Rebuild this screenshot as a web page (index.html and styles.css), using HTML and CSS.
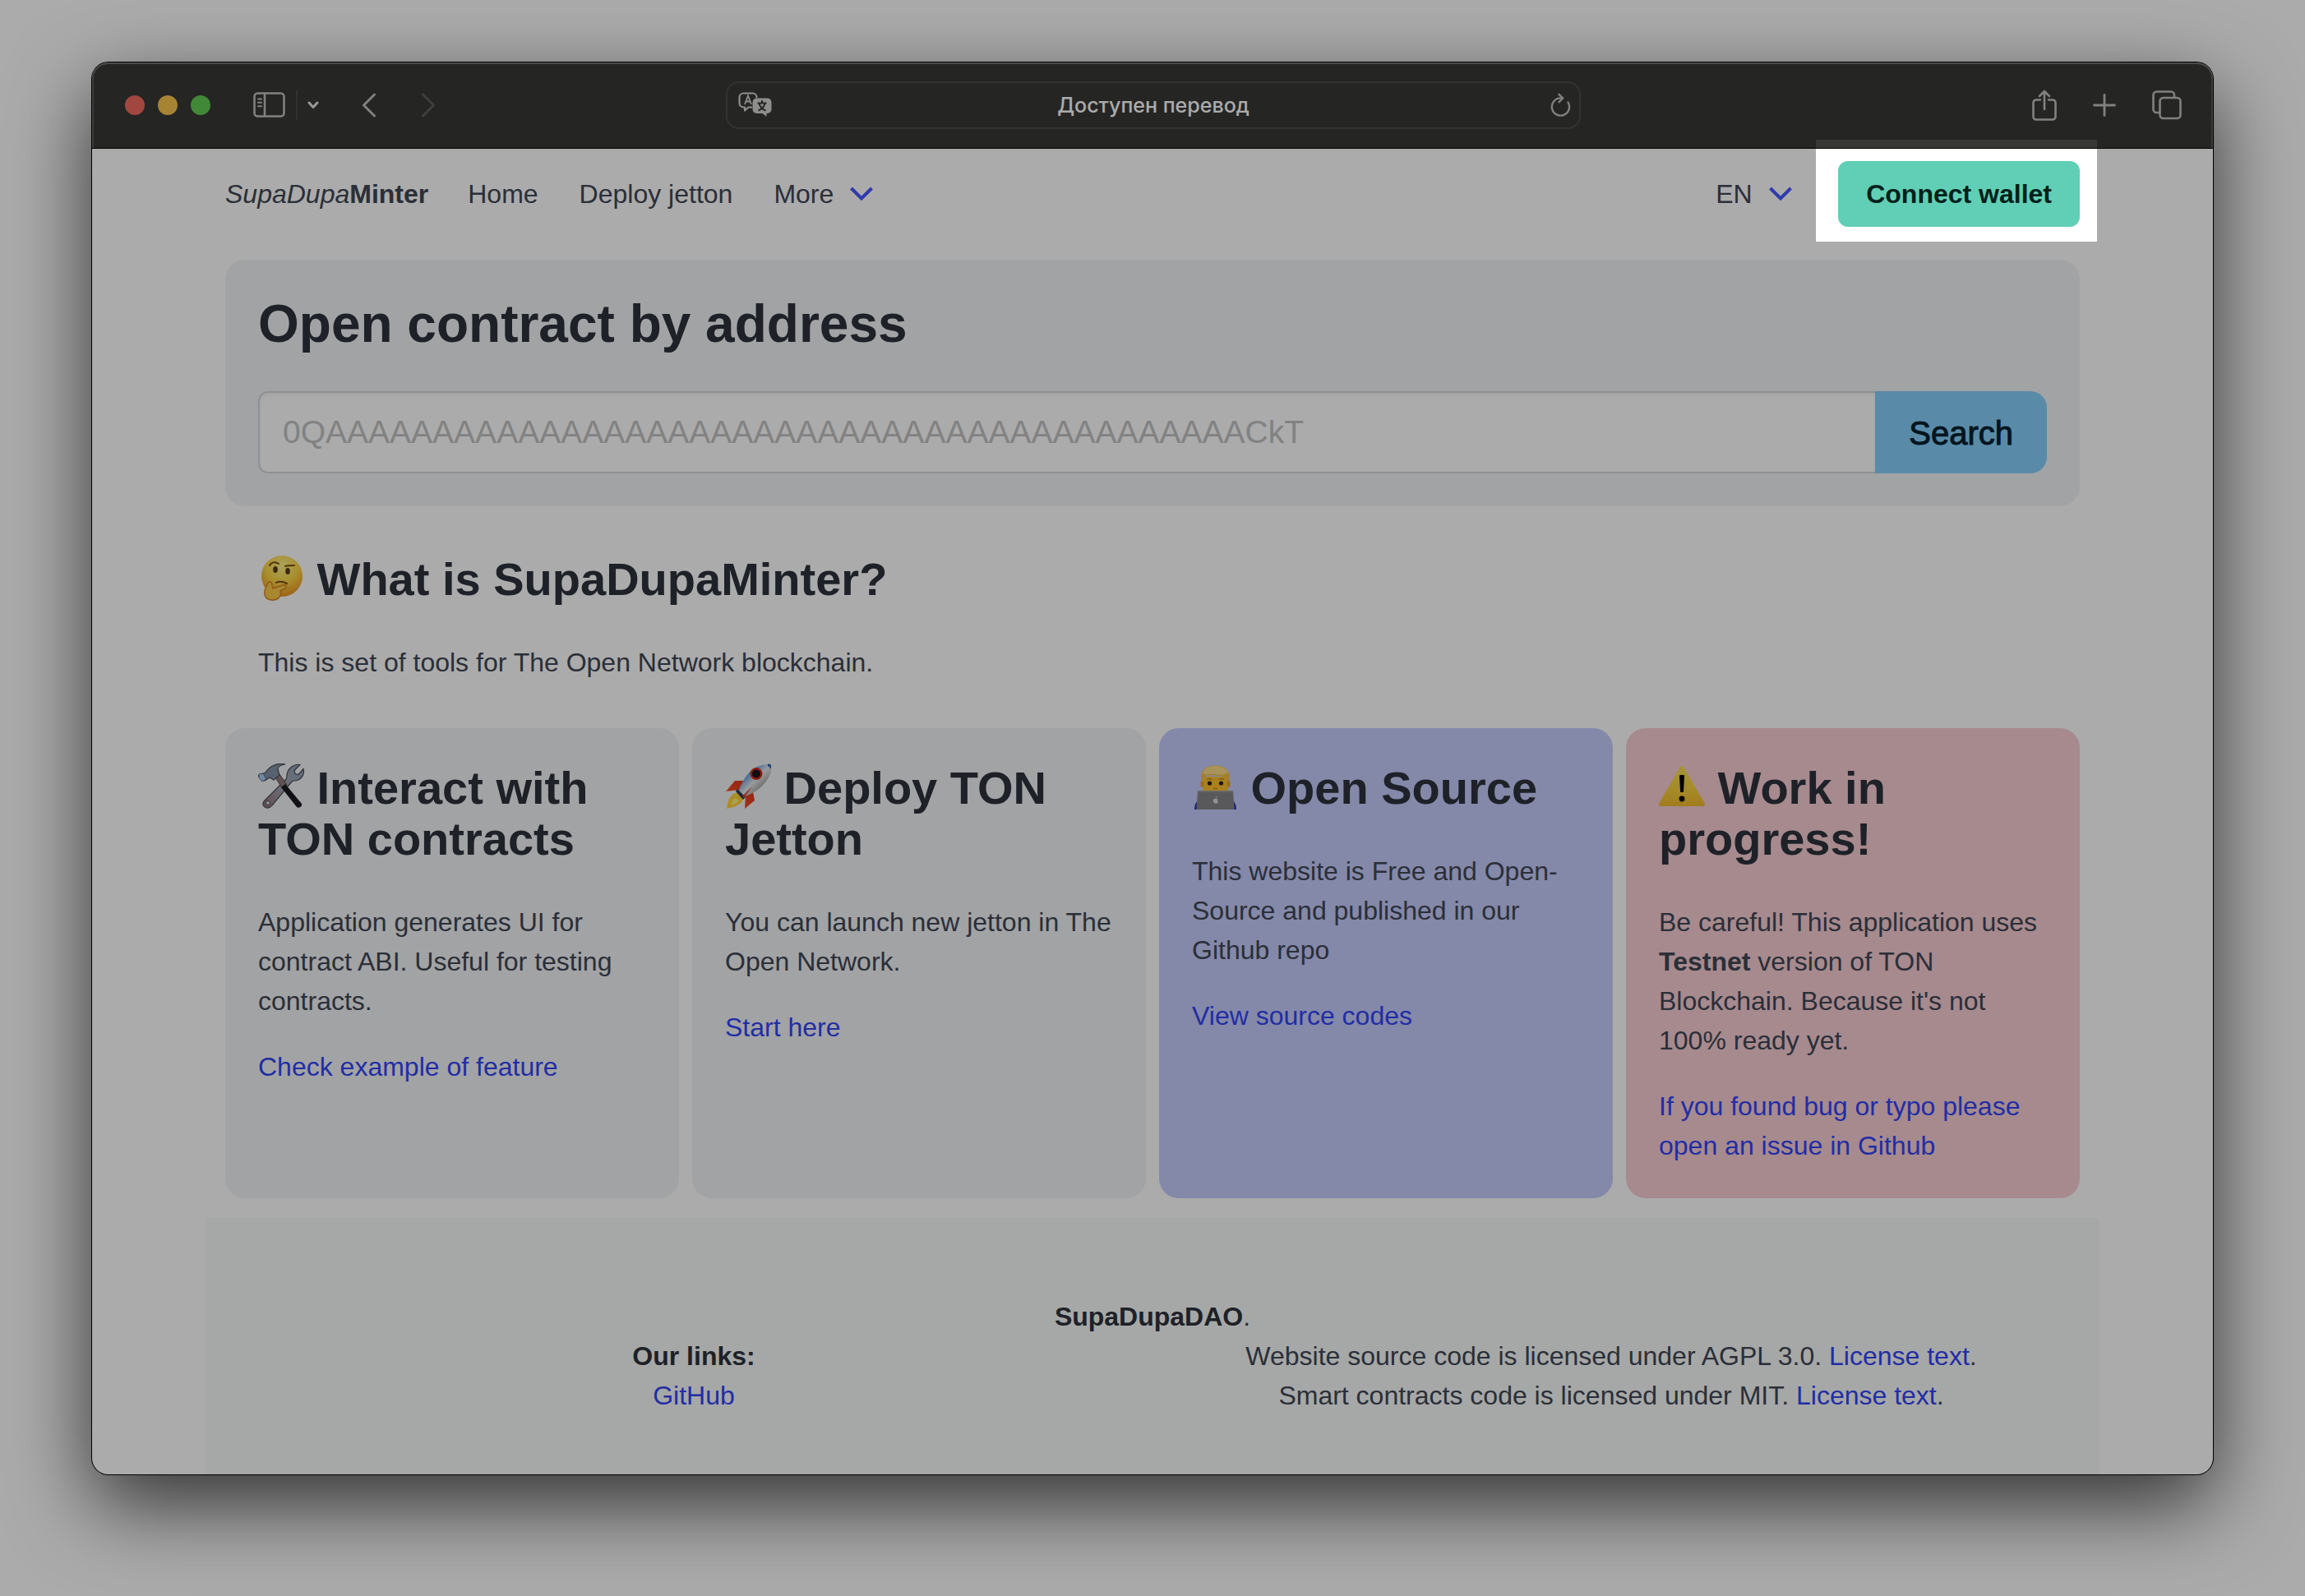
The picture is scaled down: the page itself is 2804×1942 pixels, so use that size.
FILE: index.html
```html
<!DOCTYPE html>
<html lang="en">
<head>
<meta charset="utf-8">
<title>SupaDupaMinter</title>
<meta name="viewport" content="width=device-width, initial-scale=1">
<link rel="stylesheet" href="styles.css">
</head>
<body>
<div class="window">
  <div class="toolbar">
    <div class="toolbar-side">
      <div class="lights">
        <span class="light light-close"></span>
        <span class="light light-minimize"></span>
        <span class="light light-zoom"></span>
      </div>
      <button class="tool tool-sidebar" type="button" aria-label="Sidebar">
        <svg width="40" height="32" viewBox="0 0 40 32" fill="none" stroke="currentColor" stroke-width="2.6" stroke-linecap="round"><rect x="1.5" y="1.5" width="36" height="28" rx="4"/><path d="M14 2v27"/><path d="M6 8.500h4M6 12.800h4M6 17.200h4" stroke-width="2"/></svg>
      </button>
      <span class="tool-divider"></span>
      <button class="tool tool-bright" type="button" aria-label="Tab groups">
        <svg width="14" height="10" viewBox="0 0 14 10" fill="none" stroke="currentColor" stroke-width="3" stroke-linecap="round" stroke-linejoin="round"><path d="M2 2l5 5.500 5-5.500"/></svg>
      </button>
      <button class="tool tool-back" type="button" aria-label="Back">
        <svg width="18" height="30" viewBox="0 0 18 30" fill="none" stroke="currentColor" stroke-width="3" stroke-linecap="round" stroke-linejoin="round"><path d="M15.500 2L2.500 15l13 13"/></svg>
      </button>
      <button class="tool tool-forward" type="button" aria-label="Forward" disabled>
        <svg width="18" height="30" viewBox="0 0 18 30" fill="none" stroke="currentColor" stroke-width="3" stroke-linecap="round" stroke-linejoin="round"><path d="M2.500 2l13 13-13 13"/></svg>
      </button>
    </div>
    <div class="address">
      <span class="address-slot">
        <svg width="42" height="32" viewBox="0 0 42 32" fill="none"><path d="M17 18.500h-4.500L8 22.500v-4H6.500a5 5 0 0 1-5-5v-7a5 5 0 0 1 5-5h11a5 5 0 0 1 5 5V7" stroke="#d4d4d2" stroke-width="2.200" stroke-linejoin="round"/><path d="M8 15l4-10.500L16 15M9.400 11.500h5.200" stroke="#d4d4d2" stroke-width="1.800"/><path d="M22.500 7.500h13a5 5 0 0 1 5 5v8.500a5 5 0 0 1-5 5h-1V30l-5-4h-7a5 5 0 0 1-5-5v-8.500a5 5 0 0 1 5-5z" fill="#d4d4d2"/><path d="M29 10v3M23.500 13.500h11M25.500 14c1 4 4 7 8 8.500M32.500 14c-1 4-4 7-8 8.500" stroke="#383836" stroke-width="2"/></svg>
      </span>
      <input class="address-input" type="text" aria-label="Address" value="Доступен перевод">
      <button class="tool address-slot address-reload" type="button" aria-label="Reload">
        <svg width="26" height="30" viewBox="0 0 26 30" fill="none" stroke="currentColor" stroke-width="2.400" stroke-linecap="round" stroke-linejoin="round"><path d="M22.500 11.500A10.600 10.600 0 1 1 13 6.400h2.500"/><path d="M11.500 1.800l4.800 4.700-4.800 4.700"/></svg>
      </button>
    </div>
    <div class="toolbar-side toolbar-end">
      <button class="tool" type="button" aria-label="Share">
        <svg width="30" height="38" viewBox="0 0 30 38" fill="none" stroke="currentColor" stroke-width="2.600" stroke-linecap="round" stroke-linejoin="round"><path d="M10 12.500H5a3.500 3.500 0 0 0-3.500 3.500v17A3.500 3.500 0 0 0 5 36.500h20a3.500 3.500 0 0 0 3.500-3.500V16a3.500 3.500 0 0 0-3.500-3.500h-5M15 24V2M9 8l6-6 6 6"/></svg>
      </button>
      <button class="tool" type="button" aria-label="New tab">
        <svg width="28" height="28" viewBox="0 0 28 28" fill="none" stroke="currentColor" stroke-width="2.800" stroke-linecap="round"><path d="M14 1.500v25M1.500 14h25"/></svg>
      </button>
      <button class="tool" type="button" aria-label="Tab overview">
        <svg width="36" height="36" viewBox="0 0 36 36" fill="none" stroke="currentColor" stroke-width="2.600"><rect x="9.500" y="9" width="25" height="25" rx="4"/><path d="M9 27H5.500a4 4 0 0 1-4-4V5.500a4 4 0 0 1 4-4H23a4 4 0 0 1 4 4V9"/></svg>
      </button>
    </div>
  </div>

  <div class="page">
    <header class="container navbar">
      <a class="nav-link" href="#"><em>SupaDupa</em><strong>Minter</strong></a>
      <nav class="nav-links">
        <a class="nav-link" href="#">Home</a>
        <a class="nav-link" href="#">Deploy jetton</a>
        <button class="nav-link nav-more" type="button">More
          <svg class="chevron" width="28" height="18" viewBox="0 0 28 18" fill="none" stroke="currentColor" stroke-width="4"><path d="M1.500 2L14 14.500 26.500 2"/></svg>
        </button>
      </nav>
      <label class="language">
        <select class="nav-link" aria-label="Language"><option>EN</option></select>
        <svg class="chevron" width="28" height="18" viewBox="0 0 28 18" fill="none" stroke="currentColor" stroke-width="4"><path d="M1.500 2L14 14.500 26.500 2"/></svg>
      </label>
      <div class="spotlight">
        <button class="connect" type="button">Connect wallet</button>
      </div>
    </header>

    <main class="container tiles">
      <section class="tile tile-grey">
        <h1 class="title-big">Open contract by address</h1>
        <form class="search">
          <input class="search-input" type="text" aria-label="Contract address" placeholder="0QAAAAAAAAAAAAAAAAAAAAAAAAAAAAAAAAAAAAAAAAAAACkT">
          <button class="search-button" type="button">Search</button>
        </form>
      </section>

      <section class="tile">
        <h2 class="title"><svg class="emoji" role="img" aria-label="Thinking face" viewBox="0 0 56 56">
          <defs><radialGradient id="face" cx=".5" cy=".25" r=".8"><stop offset="0" stop-color="#fff28a"/><stop offset=".5" stop-color="#fbd545"/><stop offset="1" stop-color="#e98a1e"/></radialGradient></defs>
          <circle cx="29" cy="26" r="25" fill="url(#face)"/>
          <ellipse cx="21" cy="18" rx="2.800" ry="4" fill="#5a3a10"/><ellipse cx="36" cy="20" rx="2.800" ry="4" fill="#5a3a10"/>
          <path d="M14 13c2-4 7-5 11-2M33 14c3-1 7-1 11-1" stroke="#7a4d10" stroke-width="2" fill="none" stroke-linecap="round"/>
          <path d="M22 34c4-2 9-1 13 1" stroke="#7a4d10" stroke-width="2" fill="none" stroke-linecap="round"/>
          <path d="M13 33c3-1 4 2 4 5l1 3 12-4c4-1 6 2 3 4l-6 3c2 6-3 11-8 11-8 1-12-4-11-10 0-4 2-7 5-12z" fill="#fbc94a" stroke="#d98526" stroke-width="1.500"/>
        </svg> What is SupaDupaMinter?</h2>
        <p>This is set of tools for The Open Network blockchain.</p>
      </section>

      <div class="cards">
        <section class="tile tile-grey">
          <h2 class="title"><svg class="emoji" role="img" aria-label="Hammer and wrench" viewBox="0 0 56 56">
            <defs><linearGradient id="steel" x1="1" y1="0" x2="0" y2="1"><stop offset="0" stop-color="#8da0b8"/><stop offset=".5" stop-color="#a5a8b5"/><stop offset="1" stop-color="#8f6f76"/></linearGradient></defs>
            <path d="M51 1.500l-7 7 1 4 4 1 6-7c2 7-3 14-10 14.500-2 0-3 0-4 1L17 51c-3 4-8 4-10 1-2-2-1-5 1-7l26-26c1-1 1-2 1-4 0-8 8-15 16-13.500z" fill="url(#steel)" stroke="#4a4b55" stroke-width="1.200"/>
            <circle cx="12" cy="48" r="2.500" fill="#ddd" stroke="#444" stroke-width="1"/>
            <path d="M21 17l5-4 9 13-5 5z" fill="#8e7b7e" stroke="#4a4448" stroke-width="1"/>
            <path d="M28 29l5-4 20 24c1 3-3 6-6 4z" fill="#1b1a20"/>
            <path d="M9 11C14 3 23-1 33 1c-6 1-9 3-9 6l2 7-7 6-5-3-6 4-8-6z" fill="#8292a8" stroke="#4a4b55" stroke-width="1.200"/>
            <path d="M1 13l5-1 4 7-5 3-4-5z" fill="#a9cdf5" stroke="#55657a" stroke-width="1"/>
          </svg> Interact with TON contracts</h2>
          <p>Application generates UI for contract ABI. Useful for testing contracts.</p>
          <p><a href="#">Check example of feature</a></p>
        </section>

        <section class="tile tile-grey">
          <h2 class="title"><svg class="emoji" role="img" aria-label="Rocket" viewBox="0 0 56 56">
            <defs><linearGradient id="hull" x1="0" y1="0" x2="1" y2="1"><stop offset="0" stop-color="#3f78c0"/><stop offset=".3" stop-color="#6ea0dc"/><stop offset=".5" stop-color="#e4e8ea"/><stop offset=".75" stop-color="#9c9a96"/><stop offset="1" stop-color="#3c4046"/></linearGradient>
            <linearGradient id="fin" x1="1" y1="0" x2="0" y2="1"><stop offset="0" stop-color="#d82a18"/><stop offset=".6" stop-color="#ee4a22"/><stop offset="1" stop-color="#ffc23c"/></linearGradient></defs>
            <path d="M25 21H12L1 34l17-2zM34 35l2 10-12 10 1-16z" fill="url(#fin)"/>
            <path d="M10 37C3 42 4 48 2 55c8-2 16-3 20-11l-4-9z" fill="#ffd23a"/>
            <path d="M12 42c-3 3-4 6-5 9 4-1 8-3 10-6z" fill="#fff27a"/>
            <path d="M56 2C47-1 34 4 26 15c-4 6-8 12-9 18l7 7c6-2 12-5 17-9C52 22 58 10 56 2z" fill="url(#hull)"/>
            <path d="M52 2c3 0 4 1 4 4" stroke="#2f63a5" stroke-width="3" fill="none"/>
            <circle cx="38" cy="12.500" r="6.300" fill="#15161c" stroke="#d8281c" stroke-width="2.400"/>
            <path d="M15 31l10 10-3 3-9-10z" fill="#2b3a52"/>
            <path d="M33 28L23 42l-2-2z" fill="#e03a20"/>
          </svg> Deploy TON Jetton</h2>
          <p>You can launch new jetton in The Open Network.</p>
          <p><a href="#">Start here</a></p>
        </section>

        <section class="tile tile-blue">
          <h2 class="title"><svg class="emoji" role="img" aria-label="Technologist" viewBox="0 0 56 56">
            <path d="M3 56c0-7 3-11 8-13h35c5 2 8 6 8 13z" fill="#2a35c0"/>
            <path d="M13 16h31v14c0 8-7 12-15.500 12S13 38 13 30z" fill="#fcc22c"/>
            <ellipse cx="12.500" cy="25" rx="2" ry="4" fill="#e5a42a"/><ellipse cx="44.500" cy="25" rx="2" ry="4" fill="#e5a42a"/>
            <path d="M12 22C9 9 16 2.500 28.500 2.500S48 9 45 22l-3-6c-2 0-5 0-8-1-5-1-12 0-17-1l-3 8z" fill="#f3bd45"/>
            <path d="M13 12C15 6 21 3 28.500 3S43 6 44 11c-5 3-10 3-15 2s-11 1-16-1z" fill="#fbdc86"/>
            <circle cx="21.500" cy="24" r="2.600" fill="#33210c"/><circle cx="35.500" cy="24" r="2.600" fill="#33210c"/>
            <path d="M18 19.500c2-1 5-1 6.500 0M32.500 19.500c2-1 5-1 6.500 0" stroke="#b5822a" stroke-width="1.200" fill="none"/>
            <path d="M26 30.500h5" stroke="#c47d20" stroke-width="1.200"/>
            <path d="M7 33h43l1.500 23h-46z" fill="#858588"/><path d="M7 33h43v2H7z" fill="#9a9a9c"/>
            <path d="M28.500 43c1.500-.8 3 0 3 1-1 1-.8 2 .4 2.800-.8 1.600-1.600 2-3 1.600-1.600.6-3-.8-3-2.900 0-2 1.200-3 2.600-2.500zM28.800 42c0-1.500.7-2 1.500-2.300 0 1.500-.7 2.300-1.500 2.300z" fill="#ddd"/>
          </svg> Open Source</h2>
          <p>This website is Free and Open-Source and published in our Github repo</p>
          <p><a href="#">View source codes</a></p>
        </section>

        <section class="tile tile-red">
          <h2 class="title"><svg class="emoji" role="img" aria-label="Warning" viewBox="0 0 56 56">
            <defs><linearGradient id="sign" x1="0" y1="0" x2="0" y2="1"><stop offset="0" stop-color="#f8dd55"/><stop offset=".6" stop-color="#f7cf3c"/><stop offset="1" stop-color="#f2b92e"/></linearGradient></defs>
            <path d="M25.600 4.500Q28 1 30.400 4.500L55.500 48q1.500 4-2.500 4H3q-4 0-2.500-4z" fill="url(#sign)"/>
            <path d="M25 15q0-1 1-1h4q1 0 1 1l-1 19q0 1-1 1h-2q-1 0-1-1z"/><circle cx="28" cy="43" r="3.400"/>
          </svg> Work in progress!</h2>
          <p>Be careful! This application uses <strong>Testnet</strong> version of TON Blockchain. Because it's not 100% ready yet.</p>
          <p><a href="#">If you found bug or typo please open an issue in Github</a></p>
        </section>
      </div>
    </main>

    <footer class="footer">
      <div><strong>SupaDupaDAO</strong>.</div>
      <div class="footer-columns">
        <div>
          <strong>Our links:</strong><br>
          <a href="#">GitHub</a>
        </div>
        <div>
          Website source code is licensed under AGPL 3.0. <a href="#">License text</a>.<br>
          Smart contracts code is licensed under MIT. <a href="#">License text</a>.
        </div>
      </div>
    </footer>
  </div>
</div>
</body>
</html>
```

FILE: styles.css
```css
:root {
  --text: #404654;
  --text-strong: #2e323c;
  --link: #3444f7;
  --toolbar: #383836;
  --font: "Liberation Sans", Arial, sans-serif;
}

* {
  box-sizing: border-box;
}

body {
  margin: 0;
  padding: 76px 4% 148px;
  background: #fff;
  color: var(--text);
  font: 32px/48px var(--font);
}

a {
  color: var(--link);
  text-decoration: none;
}

button,
input,
select {
  margin: 0;
  padding: 0;
  border: 0;
  background: none;
  color: inherit;
  font: inherit;
}

svg {
  display: block;
  flex: none;
}

.window {
  border-radius: 20px;
  background: #fff;
  box-shadow: 0 0 0 1px #000, 0 36px 100px rgba(0, 0, 0, 0.7);
}

/* Browser toolbar */
.toolbar {
  display: grid;
  grid-template-columns: minmax(0, 1fr) minmax(0, 1040px) minmax(0, 1fr);
  align-items: center;
  height: 105px;
  padding: 0 38px 0 40px;
  border-bottom: 1px solid #000;
  border-radius: 20px 20px 0 0;
  background: var(--toolbar);
  box-shadow: inset 0 2px #70706c, inset 2px 0 #5c5c5a, inset -2px 0 #5c5c5a;
}

.toolbar-side {
  display: flex;
  align-items: center;
}

.toolbar-end {
  justify-content: flex-end;
  gap: 44px;
}

.lights {
  display: flex;
  gap: 16px;
  margin-right: 52px;
}

.light {
  width: 24px;
  height: 24px;
  border-radius: 50%;
}

.light-close {
  background: #f06b60;
}

.light-minimize {
  background: #fac44e;
}

.light-zoom {
  background: #62cc54;
}

.tool {
  display: flex;
  align-items: center;
  justify-content: center;
  color: #c0c0be;
}

.tool-bright {
  color: #e4e4e2;
}

.tool-divider {
  width: 2px;
  height: 36px;
  margin: 0 12px;
  background: #4a4a48;
}

.tool-back {
  margin-left: 52px;
}

.tool-forward {
  margin-left: 54px;
  color: #5e5e5c;
}

.address {
  display: flex;
  align-items: center;
  height: 58px;
  border: 2px solid #4c4c4a;
  border-radius: 16px;
}

.address-slot {
  display: flex;
  flex: none;
  justify-content: center;
  width: 68px;
}

.address-reload {
  justify-content: flex-end;
  padding-right: 10px;
}

.address-input {
  flex: 1;
  min-width: 0;
  color: #fff;
  font: 500 25px/32px Inter, sans-serif;
  text-align: center;
}

/* Page */
.container {
  max-width: 2304px;
  margin: 0 auto;
  padding: 0 24px;
}

.navbar {
  display: flex;
  align-items: center;
  gap: 48px;
  padding-top: 15px;
  padding-bottom: 40px;
}

.nav-links {
  display: flex;
  flex: 1;
  gap: 50px;
}

.nav-link {
  color: var(--text);
  white-space: nowrap;
}

.nav-more,
.language {
  display: flex;
  align-items: center;
  gap: 20px;
}

.language select {
  appearance: none;
}

.chevron {
  color: #4657ff;
}

/* Dims the whole screen apart from the area round the button */
.spotlight {
  position: relative;
  margin-left: 8px;
}

.spotlight::after {
  content: "";
  position: absolute;
  inset: -26px -21px -18px -27px;
  box-shadow: 0 0 0 9999px rgba(0, 0, 0, 0.33);
  pointer-events: none;
}

.connect {
  display: block;
  height: 80px;
  padding: 0 34px;
  border-radius: 12px;
  background: #60cfb5;
  color: #04201a;
  font-weight: 700;
  white-space: nowrap;
}

.tiles,
.cards {
  display: grid;
  gap: 16px;
}

.cards {
  grid-template-columns: repeat(4, minmax(0, 1fr));
}

.tile {
  padding: 42px 40px 40px;
  border-radius: 24px;
}

.tile-grey {
  background: #f2f4f6;
}

.tile-blue {
  background: #c5ccfc;
}

.tile-red {
  background: #f8ced4;
}

.title,
.title-big {
  margin: 0 0 46px;
  color: var(--text-strong);
  font-weight: 700;
}

.title {
  font-size: 56px;
  line-height: 62px;
}

.title-big {
  font-size: 64px;
  line-height: 72px;
}

.emoji {
  display: inline-block;
  width: 56px;
  height: 56px;
  vertical-align: -7px;
}

.tile p {
  margin: 0;
}

.tile p + p {
  margin-top: 32px;
}

.search {
  display: flex;
}

.search-input {
  flex: 1;
  min-width: 0;
  height: 100px;
  padding: 0 28px;
  border: 2px solid #d4d7dd;
  border-right: 0;
  border-radius: 12px 0 0 12px;
  background: #fff;
  box-shadow: inset 0 2px 4px rgba(10, 10, 10, 0.05);
  font-size: 39px;
}

.search-input::placeholder {
  color: #c2c2c2;
}

.search-button {
  padding: 2px 41px 0;
  border-radius: 0 20px 20px 0;
  background: #85cffb;
  color: #05202e;
  font-size: 40px;
  -webkit-text-stroke: 1px currentColor;
}

.footer {
  max-width: 2304px;
  margin: 24px auto 0;
  padding: 96px 48px 72px;
  background: #f8fbf9;
  text-align: center;
}

.footer strong {
  color: var(--text-strong);
}

.footer-columns {
  display: grid;
  grid-template-columns: repeat(2, minmax(0, 1fr));
  gap: 24px;
}
```
